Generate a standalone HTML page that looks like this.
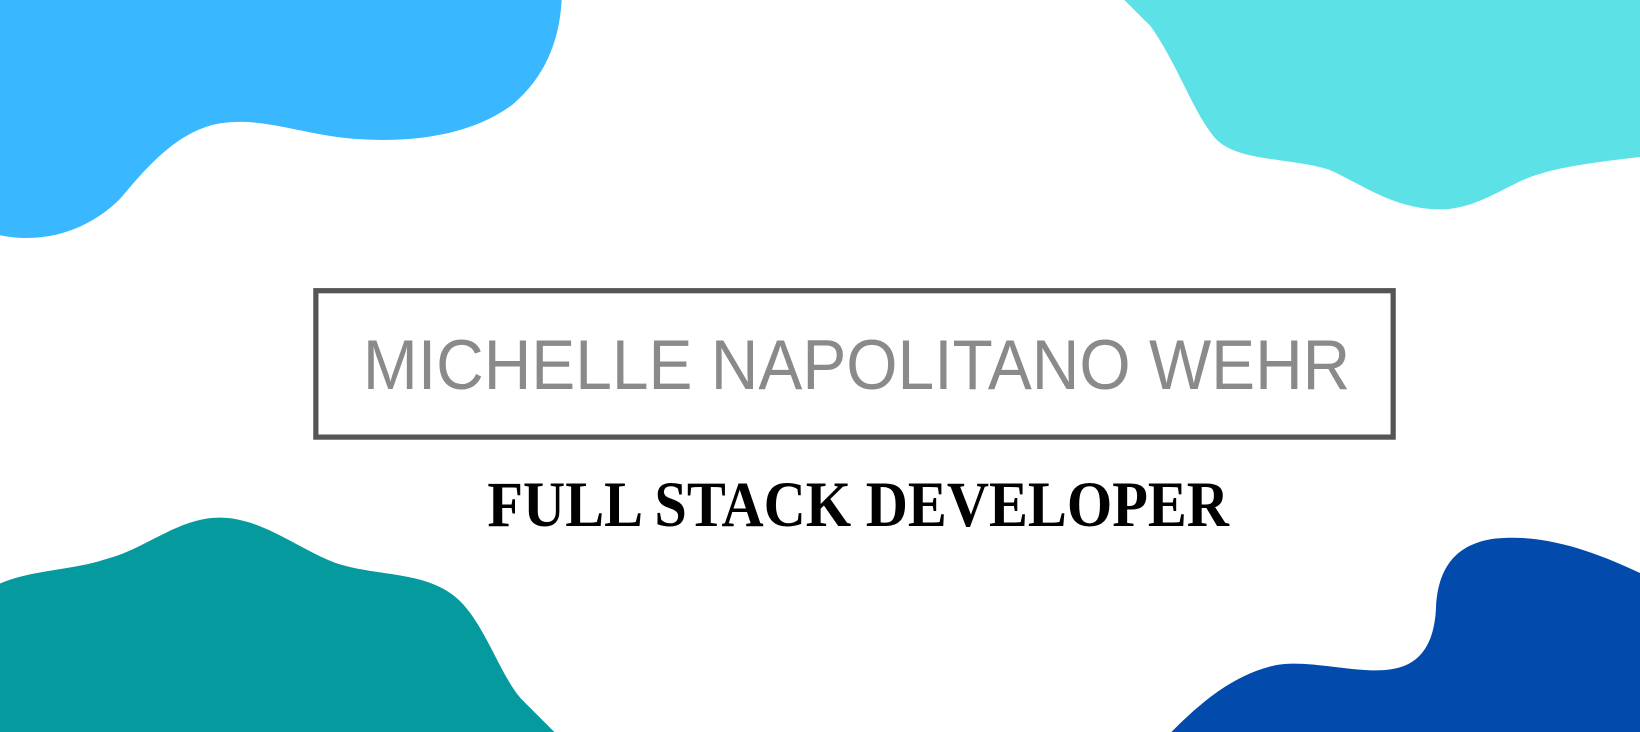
<!DOCTYPE html>
<html><head><meta charset="utf-8"><style>
html,body{margin:0;padding:0;background:#fff;width:1640px;height:732px;overflow:hidden}
svg{display:block}
</style></head><body>
<svg width="1640" height="732" viewBox="0 0 1568 700" preserveAspectRatio="none">
<path fill="#3AB8FF" d="M0,0 H537 C535,40 520,75 490,100 C450,130 390,138 330,132 C280,126 250,112 210,118 C170,125 140,160 115,190 C90,215 50,235 0,225 Z"/>
<path fill="#5CE1E6" d="M1075,0 H1568 V150 C1520,156 1480,160 1450,175 C1420,190 1400,202 1370,200 C1330,198 1300,175 1270,162 C1230,150 1180,155 1160,130 C1140,105 1125,60 1100,25 Z"/>
<path fill="#049A9E" d="M0,558 C30,545 70,545 100,535 C140,525 170,495 210,495 C250,495 285,525 320,538 C360,552 410,545 440,575 C465,600 480,650 500,670 L530,700 H0 Z"/>
<path fill="#034AAD" d="M1120,700 C1150,670 1180,645 1220,636 C1250,630 1300,645 1330,640 C1365,635 1372,605 1373,580 C1375,545 1390,520 1430,515 C1480,510 1530,530 1568,548 V700 Z"/>
<rect x="302" y="278" width="1030" height="140" fill="none" stroke="#555" stroke-width="5"/>
<text x="347" y="372" font-family="Liberation Sans, sans-serif" font-size="67" fill="#8a8a8a" textLength="944" lengthAdjust="spacingAndGlyphs">MICHELLE NAPOLITANO WEHR</text>
<text x="466" y="503" font-family="Liberation Serif, serif" font-size="62" font-weight="bold" fill="#000" textLength="709" lengthAdjust="spacingAndGlyphs">FULL STACK DEVELOPER</text>
</svg>
</body></html>
